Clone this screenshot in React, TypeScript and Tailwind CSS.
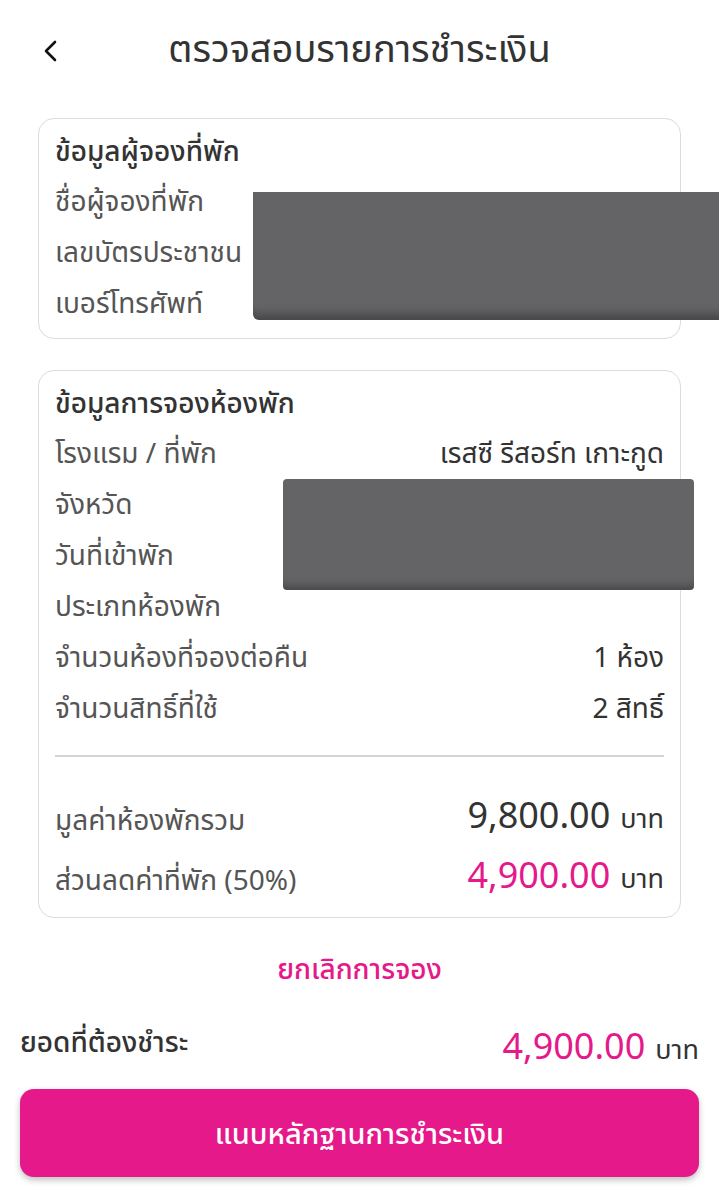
import React from 'react';

const Row = ({ label, value }: { label: string; value?: string }) => (
  <div className="flex h-[51px] items-center justify-between">
    <span className="text-[#555]">{label}</span>
    {value && <span className="text-[#333]">{value}</span>}
  </div>
);

const App = () => {
  return (
    <div
      className="relative min-h-[1200px] bg-white text-[28px] leading-none"
      style={{ fontFamily: '"Noto Sans Thai", "Noto Sans", "Liberation Sans", sans-serif' }}
    >
      {/* Header */}
      <div className="relative flex h-[102px] items-center justify-center">
        <svg className="absolute left-[40px] top-[38px]" width="22" height="26" viewBox="0 0 22 26">
          <path d="M15 4 L6 13 L15 22" fill="none" stroke="#111" strokeWidth="2.6" strokeLinecap="round" strokeLinejoin="round" />
        </svg>
        <h1 className="text-[38px] text-[#333]">ตรวจสอบรายการชำระเงิน</h1>
      </div>

      <div className="px-[38px] pt-[16px]">
        {/* Booker info */}
        <div className="rounded-[16px] border border-[#dcdcdc] px-[16px] pb-[8px] pt-[10px]">
          <div className="flex h-[48px] items-center font-medium text-[#333]">ข้อมูลผู้จองที่พัก</div>
          <Row label="ชื่อผู้จองที่พัก" />
          <Row label="เลขบัตรประชาชน" />
          <Row label="เบอร์โทรศัพท์" />
        </div>

        {/* Booking info */}
        <div className="mt-[31px] rounded-[16px] border border-[#dcdcdc] px-[16px] pb-[10px] pt-[10px]">
          <div className="flex h-[48px] items-center font-medium text-[#333]">ข้อมูลการจองห้องพัก</div>
          <Row label="โรงแรม / ที่พัก" value="เรสซี รีสอร์ท เกาะกูด" />
          <Row label="จังหวัด" />
          <Row label="วันที่เข้าพัก" />
          <Row label="ประเภทห้องพัก" />
          <Row label="จำนวนห้องที่จองต่อคืน" value="1 ห้อง" />
          <Row label="จำนวนสิทธิ์ที่ใช้" value="2 สิทธิ์" />
          <div className="mt-[20px] h-[2px] bg-[#d4d4d6]" />
          <div className="mt-[30px] flex h-[60px] items-center justify-between">
            <span className="mt-[10px] text-[#555]">มูลค่าห้องพักรวม</span>
            <span className="flex items-baseline gap-[10px]">
              <span className="text-[36px] text-[#333]">9,800.00</span>
              <span className="text-[27px] text-[#333]">บาท</span>
            </span>
          </div>
          <div className="flex h-[60px] items-center justify-between">
            <span className="mt-[10px] text-[#555]">ส่วนลดค่าที่พัก (50%)</span>
            <span className="flex items-baseline gap-[10px]">
              <span className="text-[36px] text-[#e5198a]">4,900.00</span>
              <span className="text-[27px] text-[#333]">บาท</span>
            </span>
          </div>
        </div>
      </div>

      {/* Cancel */}
      <div className="mt-[39px] text-center font-medium text-[#e5198a]">ยกเลิกการจอง</div>

      {/* Total */}
      <div className="mt-[45px] flex items-start justify-between px-[20px]">
        <span className="font-medium text-[#333]">ยอดที่ต้องชำระ</span>
        <span className="flex items-baseline gap-[10px]">
          <span className="text-[36px] text-[#e5198a]">4,900.00</span>
          <span className="text-[27px] text-[#333]">บาท</span>
        </span>
      </div>

      {/* Button */}
      <div className="px-[20px] pt-[23px]">
        <button className="flex h-[88px] w-full items-center justify-center rounded-[14px] bg-[#e5198a] pt-[4px] text-[29px] font-medium text-white shadow-[0_3px_6px_rgba(0,0,0,0.25)]">
          แนบหลักฐานการชำระเงิน
        </button>
      </div>

      {/* Redaction overlays */}
      <div className="absolute left-[253px] top-[192px] h-[128px] w-[466px] rounded-bl-[6px] bg-[#646466] shadow-[inset_0_-14px_10px_-8px_rgba(0,0,0,0.3)]" />
      <div className="absolute left-[283px] top-[479px] h-[111px] w-[411px] rounded-[4px] bg-[#646466] shadow-[inset_0_-12px_8px_-8px_rgba(0,0,0,0.3)]" />
    </div>
  );
};

export default App;
